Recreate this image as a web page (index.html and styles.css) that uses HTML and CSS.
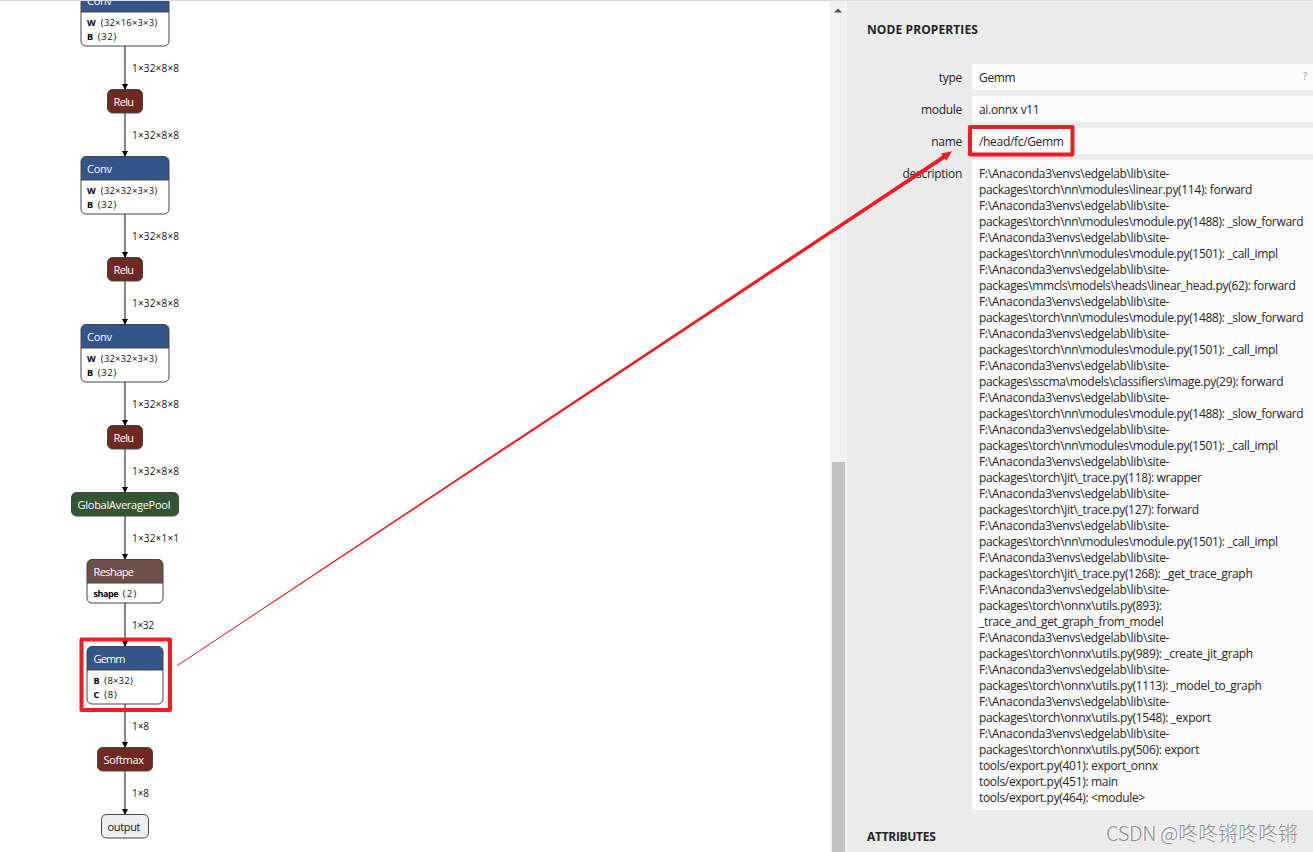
FILE: index.html
```
<!DOCTYPE html>
<html lang="en">
<head>
    <meta charset="UTF-8">
    <meta name="viewport" content="width=device-width, initial-scale=1.0">
    <title>Netron</title>
    <link rel="stylesheet" href="styles.css">
</head>
<body>
    <div class="app">
        <div class="graph">
            <svg class="graph-canvas" width="830" height="851" viewBox="0 1 830 851">
                <defs>
                    <marker id="arrow" viewBox="0 0 6 6" refX="6" refY="3" markerWidth="6" markerHeight="6" markerUnits="userSpaceOnUse" orient="auto">
                        <path d="M0 0L6 3L0 6Z"/>
                    </marker>
                    <g id="conv-box">
                        <rect class="body" x="81" y="0.5" width="88" height="57.5" rx="5"/>
                        <path class="conv" d="M81 24V5.500a5 5 0 0 1 5-5h78a5 5 0 0 1 5 5V24Z"/>
                        <path class="outline" d="M81 24H169"/>
                        <rect class="outline" x="81" y="0.5" width="88" height="57.5" rx="5"/>
                    </g>
                    <g id="relu-box">
                        <rect class="relu" x="107.500" y="0.500" width="35" height="23.500" rx="5"/>
                    </g>
                </defs>

                <!-- edges -->
                <g class="edges">
                    <path d="M125 46V90"/>
                    <path d="M125 113V157"/>
                    <path d="M125 214V258"/>
                    <path d="M125 281V325"/>
                    <path d="M125 382V426"/>
                    <path d="M125 449V493"/>
                    <path d="M125 516V560"/>
                    <path d="M125 603V647"/>
                    <path d="M125 704V748"/>
                    <path d="M125 771V815"/>
                </g>
                <g class="edge-label">
                    <text x="132" y="71.500" textLength="47">1×32×8×8</text>
                    <text x="132" y="138.500" textLength="47">1×32×8×8</text>
                    <text x="132" y="239.500" textLength="47">1×32×8×8</text>
                    <text x="132" y="306.500" textLength="47">1×32×8×8</text>
                    <text x="132" y="407.500" textLength="47">1×32×8×8</text>
                    <text x="132" y="474.500" textLength="47">1×32×8×8</text>
                    <text x="132" y="541.500" textLength="47">1×32×1×1</text>
                    <text x="132" y="628.500" textLength="22">1×32</text>
                    <text x="132" y="729.500" textLength="17">1×8</text>
                    <text x="132" y="796.500" textLength="17">1×8</text>
                </g>

                <!-- nodes -->
                <use href="#conv-box" y="-12"/>
                <use href="#conv-box" y="156"/>
                <use href="#conv-box" y="324"/>
                <use href="#relu-box" y="89"/>
                <use href="#relu-box" y="257"/>
                <use href="#relu-box" y="425"/>
                <rect class="pool" x="71.500" y="492.500" width="107" height="23.500" rx="5"/>

                <rect class="body" x="87" y="559.500" width="76" height="43.500" rx="5"/>
                <path class="reshape" d="M87 583V564.500a5 5 0 0 1 5-5h66a5 5 0 0 1 5 5V583Z"/>
                <path class="outline" d="M87 583H163"/>
                <rect class="outline" x="87" y="559.500" width="76" height="43.500" rx="5"/>

                <rect class="body" x="87" y="646.500" width="76" height="57.500" rx="5"/>
                <path class="conv" d="M87 670V651.500a5 5 0 0 1 5-5h66a5 5 0 0 1 5 5V670Z"/>
                <path class="outline" d="M87 670H163"/>
                <rect class="outline" x="87" y="646.500" width="76" height="57.500" rx="5"/>

                <rect class="relu" x="97.500" y="747.500" width="55" height="23.500" rx="5"/>
                <rect class="output" x="101.500" y="814.500" width="47" height="23.500" rx="5"/>

                <g class="node-name">
                    <text x="87" y="5" textLength="25">Conv</text>
                    <text x="113.500" y="106" textLength="20.500">Relu</text>
                    <text x="87" y="173" textLength="25">Conv</text>
                    <text x="113.500" y="274" textLength="20.500">Relu</text>
                    <text x="87" y="341" textLength="25">Conv</text>
                    <text x="113.500" y="442" textLength="20.500">Relu</text>
                    <text x="77.500" y="509" textLength="93">GlobalAveragePool</text>
                    <text x="93.500" y="576" textLength="40.500">Reshape</text>
                    <text x="93.500" y="663" textLength="32">Gemm</text>
                    <text x="103.500" y="764" textLength="40.500">Softmax</text>
                    <text class="dark" x="107.500" y="831" textLength="33">output</text>
                </g>
                <g class="node-attr">
                    <text class="key" x="87" y="26" textLength="9">W</text>
                    <text x="100" y="26" textLength="58">⟨32×16×3×3⟩</text>
                    <text class="key" x="87" y="40">B</text>
                    <text x="97" y="40" textLength="20">⟨32⟩</text>
                    <text class="key" x="87" y="194" textLength="9">W</text>
                    <text x="100" y="194" textLength="58">⟨32×32×3×3⟩</text>
                    <text class="key" x="87" y="208">B</text>
                    <text x="97" y="208" textLength="20">⟨32⟩</text>
                    <text class="key" x="87" y="362" textLength="9">W</text>
                    <text x="100" y="362" textLength="58">⟨32×32×3×3⟩</text>
                    <text class="key" x="87" y="376">B</text>
                    <text x="97" y="376" textLength="20">⟨32⟩</text>
                    <text class="key" x="93.500" y="597" textLength="25">shape</text>
                    <text x="122" y="597" textLength="15">⟨2⟩</text>
                    <text class="key" x="93.500" y="684">B</text>
                    <text x="103.500" y="684" textLength="30">⟨8×32⟩</text>
                    <text class="key" x="93.500" y="698">C</text>
                    <text x="103.500" y="698" textLength="14">⟨8⟩</text>
                </g>
            </svg>
        </div>

        <div class="scrollbar">
            <svg class="scroll-up" width="8" height="5" viewBox="0 0 8 5"><path d="M0 4.500L4 0.500L8 4.500Z"/></svg>
            <div class="thumb"></div>
        </div>

        <div class="sidebar">
            <h1 class="title">Node Properties</h1>
            <div class="item">
                <div class="name">type</div>
                <div class="value">Gemm<span class="help">?</span></div>
            </div>
            <div class="item">
                <div class="name">module</div>
                <div class="value">ai.onnx v11</div>
            </div>
            <div class="item">
                <div class="name">name</div>
                <div class="value">/head/fc/Gemm</div>
            </div>
            <div class="item">
                <div class="name">description</div>
                <div class="value trace">F:\Anaconda3\envs\edgelab\lib\site-
packages\torch\nn\modules\linear.py(114): forward
F:\Anaconda3\envs\edgelab\lib\site-
packages\torch\nn\modules\module.py(1488): _slow_forward
F:\Anaconda3\envs\edgelab\lib\site-
packages\torch\nn\modules\module.py(1501): _call_impl
F:\Anaconda3\envs\edgelab\lib\site-
packages\mmcls\models\heads\linear_head.py(62): forward
F:\Anaconda3\envs\edgelab\lib\site-
packages\torch\nn\modules\module.py(1488): _slow_forward
F:\Anaconda3\envs\edgelab\lib\site-
packages\torch\nn\modules\module.py(1501): _call_impl
F:\Anaconda3\envs\edgelab\lib\site-
packages\sscma\models\classifiers\image.py(29): forward
F:\Anaconda3\envs\edgelab\lib\site-
packages\torch\nn\modules\module.py(1488): _slow_forward
F:\Anaconda3\envs\edgelab\lib\site-
packages\torch\nn\modules\module.py(1501): _call_impl
F:\Anaconda3\envs\edgelab\lib\site-
packages\torch\jit\_trace.py(118): wrapper
F:\Anaconda3\envs\edgelab\lib\site-
packages\torch\jit\_trace.py(127): forward
F:\Anaconda3\envs\edgelab\lib\site-
packages\torch\nn\modules\module.py(1501): _call_impl
F:\Anaconda3\envs\edgelab\lib\site-
packages\torch\jit\_trace.py(1268): _get_trace_graph
F:\Anaconda3\envs\edgelab\lib\site-
packages\torch\onnx\utils.py(893):
_trace_and_get_graph_from_model
F:\Anaconda3\envs\edgelab\lib\site-
packages\torch\onnx\utils.py(989): _create_jit_graph
F:\Anaconda3\envs\edgelab\lib\site-
packages\torch\onnx\utils.py(1113): _model_to_graph
F:\Anaconda3\envs\edgelab\lib\site-
packages\torch\onnx\utils.py(1548): _export
F:\Anaconda3\envs\edgelab\lib\site-
packages\torch\onnx\utils.py(506): export
tools/export.py(401): export_onnx
tools/export.py(451): main
tools/export.py(464): &lt;module&gt;</div>
            </div>
            <h2 class="title attributes">Attributes</h2>
        </div>
    </div>

    <svg class="marks" width="1313" height="852" viewBox="0 0 1313 852">
        <rect x="81.500" y="639.500" width="88.500" height="70.500"/>
        <rect x="970" y="127" width="102.500" height="27.500"/>
        <path d="M177 665.300L942.500 155.600L941.200 153.600L952 151.300L946.300 160.800L944.800 158.700L177.400 665.900Z"/>
    </svg>
    <div class="watermark"><span>CSDN @</span>咚咚锵咚咚锵</div>
</body>
</html>
```

FILE: styles.css
```
* {
    box-sizing: border-box;
}
body {
    margin: 0;
    height: 852px;
    overflow: hidden;
    position: relative;
    background: #fff;
    font-family: "Open Sans", "Noto Sans", sans-serif;
    font-size: 12px;
    color: #252525;
}
.app {
    display: flex;
    height: 852px;
    border-top: 1px solid #dadada;
}

/* graph */
.graph {
    width: 830px;
    flex: none;
}
.graph-canvas {
    display: block;
}
.edges path {
    stroke: #222;
    stroke-width: 1.1;
    fill: none;
    marker-end: url(#arrow);
}
.edge-label {
    font-size: 10px;
    fill: #111;
}
.node-name {
    font-size: 11px;
    fill: #fff;
}
.node-name .dark {
    fill: #111;
}
.node-attr {
    font-family: "Open Sans", "DejaVu Sans", sans-serif;
    font-size: 9.5px;
    fill: #111;
}
.node-attr .key {
    font-size: 9px;
    font-weight: bold;
    fill: #000;
}
.body {
    fill: #fff;
}
.conv {
    fill: #335588;
}
.outline {
    fill: none;
    stroke: #444;
}
.relu {
    fill: #702921;
    stroke: #444;
}
.pool {
    fill: #335533;
    stroke: #444;
}
.reshape {
    fill: #6c4f47;
}
.output {
    fill: #eee;
    stroke: #444;
}

/* scrollbar */
.scrollbar {
    width: 17px;
    flex: none;
    display: flex;
    flex-direction: column;
    align-items: center;
    background: #f1f1f1;
    border-right: 1px solid #f6f6f6;
    padding-top: 7px;
}
.scroll-up {
    fill: #505050;
}
.thumb {
    width: 13px;
    margin-top: 449px;
    margin-left: 1px;
    flex: 1;
    background: #c1c1c1;
}

/* sidebar */
.sidebar {
    flex: 1;
    min-width: 0;
    background: #ebebeb;
    padding: 20px 0 0 20px;
}
.title {
    margin: 0 0 34px;
    font-size: 12px;
    line-height: 17px;
    font-weight: 700;
    text-transform: uppercase;
    letter-spacing: 0.1px;
}
.title + .item {
    margin-top: -8px;
}
.item {
    display: flex;
    margin-bottom: 6px;
}
.name {
    width: 95px;
    margin-right: 10px;
    padding-top: 6px;
    line-height: 16px;
    letter-spacing: -0.3px;
    text-align: right;
    flex: none;
}
.value {
    flex: 1;
    position: relative;
    padding: 6px 0 4px 7px;
    line-height: 16px;
    letter-spacing: -0.32px;
    background: #fcfcfc;
    border-radius: 2px 0 0 2px;
}
.trace {
    white-space: pre;
}
.help {
    position: absolute;
    right: 6px;
    top: 4px;
    font-size: 10px;
    color: #999;
}
.attributes {
    margin-top: 18px;
    letter-spacing: -0.3px;
}

/* marks over the window */
.marks {
    position: absolute;
    left: 0;
    top: 0;
}
.marks rect {
    fill: none;
    stroke: #ee1c25;
    stroke-width: 4;
    stroke-linejoin: round;
}
.marks path {
    fill: #ee1c25;
}
.watermark {
    position: absolute;
    right: 15px;
    top: 818px;
    font-family: "Noto Sans CJK SC", sans-serif;
    font-weight: 300;
    font-size: 20px;
    line-height: 30px;
    color: #8c8c8c;
    white-space: nowrap;
    text-shadow: -1px -1px 0 #fff;
}
.watermark span {
    letter-spacing: -0.3px;
}
```
